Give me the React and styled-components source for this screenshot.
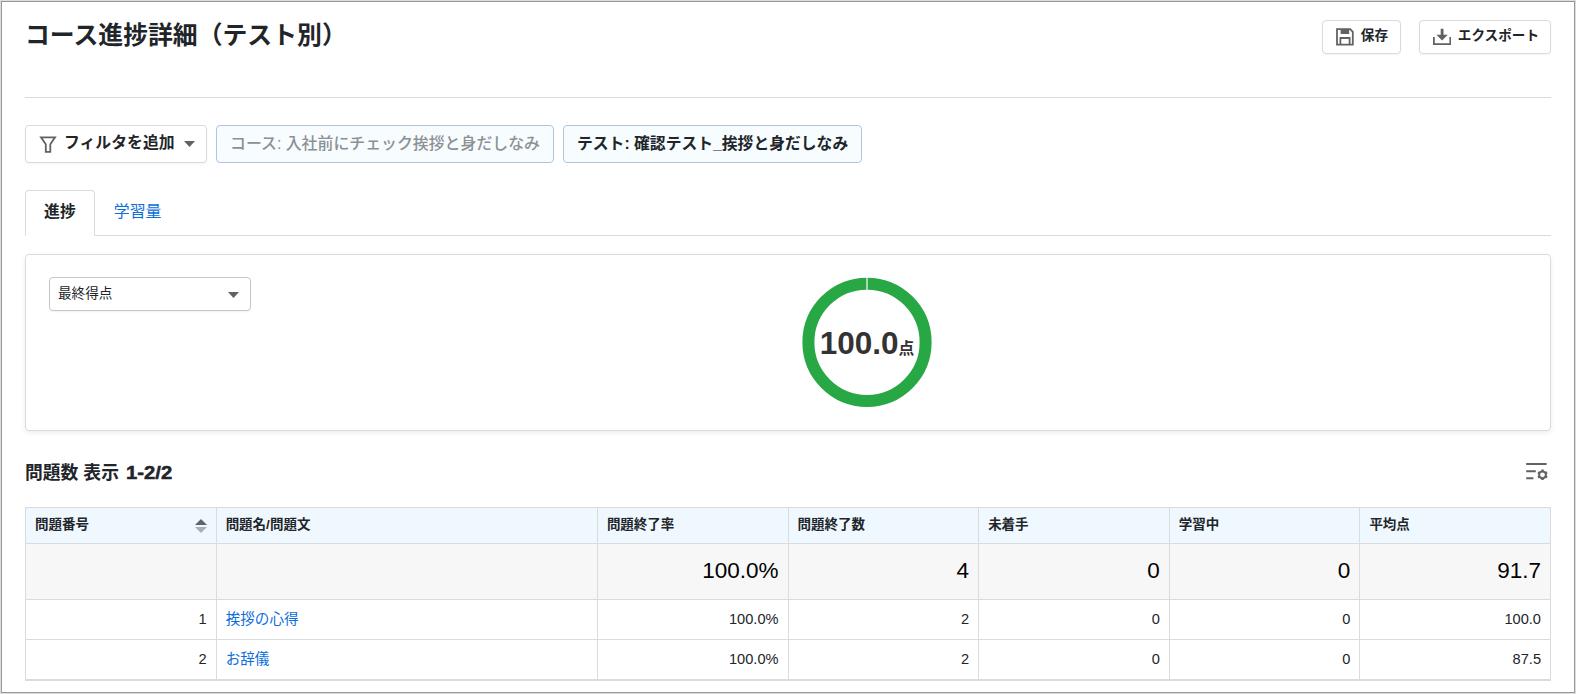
import React from 'react';
import styled, { createGlobalStyle } from 'styled-components';

const GlobalStyle = createGlobalStyle`
  * {
    box-sizing: border-box;
  }

  body {
    margin: 0;
    background: #fff;
    color: #212529;
    font-family: 'Liberation Sans', 'Noto Sans CJK JP', sans-serif;
  }
`;

const Frame = styled.div`
  width: 1576px;
  height: 694px;
  border: 1px solid #dcdcdc;
  overflow: hidden;
`;

const Page = styled.main`
  height: 100%;
  border: 1px solid #999;
  padding: 18px 23px 0;
`;

const Header = styled.header`
  display: flex;
  justify-content: space-between;
  align-items: flex-start;
  height: 78px;
  border-bottom: 1px solid #dadbdd;
`;

const Title = styled.h1`
  margin: 0;
  font-size: 24.85px;
  line-height: 32px;
  font-weight: bold;
`;

const ButtonGroup = styled.div`
  display: flex;
  gap: 18px;
`;

const Button = styled.button`
  display: flex;
  align-items: center;
  gap: 7px;
  height: 34px;
  padding: 0 11px 0 13px;
  border: 1px solid #dadbdd;
  border-radius: 4px;
  background: #fff;
  box-shadow: 0 1px 2px rgba(0, 0, 0, 0.05);
  color: #212529;
  font-family: inherit;
  font-size: 13.6px;
  line-height: 20px;
  font-weight: bold;
  white-space: nowrap;

  span {
    padding-bottom: 2px;
  }
`;

const SaveButton = styled(Button)`
  width: 79px;
`;

const FilterButton = styled(Button)`
  width: 182px;
  height: 38px;
  gap: 7px;
  padding: 0 11px 0 13px;
  font-size: 15.85px;

  svg:last-child {
    margin-left: auto;
  }
`;

const Filters = styled.div`
  display: flex;
  gap: 9px;
  margin-top: 27px;
`;

const Chip = styled.div`
  width: ${({ $width }) => $width}px;
  height: 38px;
  padding: 0 13px;
  border: 1px solid #b0c4de;
  border-radius: 4px;
  background: #f7fcff;
  color: ${({ $muted }) => ($muted ? '#8c9093' : '#212529')};
  font-size: ${({ $muted }) => ($muted ? 15.9 : 15.8)}px;
  line-height: 35px;
  font-weight: ${({ $muted }) => ($muted ? 500 : 'bold')};
  white-space: nowrap;
`;

const Tabs = styled.nav`
  display: flex;
  height: 46px;
  margin-top: 27px;
  border-bottom: 1px solid #dadbdd;
`;

const Tab = styled.a`
  height: 46px;
  padding: 0 18px;
  border: 1px solid ${({ $active }) => ($active ? '#dadbdd' : 'transparent')};
  border-bottom: 1px solid ${({ $active }) => ($active ? '#fff' : 'transparent')};
  border-radius: 4px 4px 0 0;
  color: ${({ $active }) => ($active ? '#212529' : '#0d6edb')};
  font-size: 15.9px;
  line-height: 42px;
  font-weight: ${({ $active }) => ($active ? 'bold' : 'normal')};
`;

const Card = styled.section`
  display: grid;
  grid-template-columns: 202px 1fr;
  height: 177px;
  margin-top: 18px;
  padding: 22px 23px;
  border: 1px solid #dadbdd;
  border-radius: 4px;
  box-shadow: 0 2px 5px rgba(0, 0, 0, 0.08);
`;

const Select = styled.div`
  display: flex;
  justify-content: space-between;
  align-items: center;
  height: 34px;
  padding: 0 11px 0 8px;
  border: 1px solid #c4c6c8;
  border-radius: 4px;
  box-shadow: 0 1px 2px rgba(0, 0, 0, 0.06);
  font-size: 13.6px;
  line-height: 20px;

  span {
    padding-bottom: 1px;
  }

  svg {
    margin-top: 2px;
  }
`;

const Chart = styled.div`
  display: grid;
  justify-content: center;
  margin-left: -44px;

  > * {
    grid-area: 1 / 1;
  }
`;

const Score = styled.div`
  display: flex;
  justify-content: center;
  align-items: baseline;
  padding-top: 47px;
  color: #333;
  font-size: 31.5px;
  line-height: 38px;
  font-weight: bold;

  small {
    font-size: 15.75px;
    line-height: 20px;
  }
`;

const ListBar = styled.div`
  display: flex;
  justify-content: space-between;
  height: 52px;
  margin-top: 24px;
`;

const ListTitle = styled.h2`
  display: flex;
  gap: 5px;
  margin: 0;
  font-size: 17.8px;
  line-height: 36px;
  font-weight: bold;
`;

// Heavier, wider numerals than the regular bold face
const Range = styled.span`
  margin-left: 2px;
  transform: scaleX(1.14);
  transform-origin: left;
  -webkit-text-stroke: 0.5px #212529;
`;

const SettingsButton = styled.button`
  height: 22px;
  margin: 7px 3px 0 0;
  padding: 0;
  border: 0;
  background: none;
`;

const Table = styled.table`
  width: 100%;
  table-layout: fixed;
  border-collapse: separate;
  border-spacing: 0;
  border-top: 1px solid #dadbdd;
  border-left: 1px solid #dadbdd;
  border-bottom: 1px solid #dadbdd;
`;

const HeadCell = styled.th`
  width: ${({ $wide }) => ($wide ? '25%' : '12.5%')};
  height: 36px;
  padding: 0 9px 1px;
  border-right: 1px solid #dadbdd;
  border-bottom: 1px solid #dadbdd;
  background: #f0f8ff;
  font-size: 13.5px;
  line-height: 20px;
  font-weight: bold;
  text-align: left;
`;

const HeadLabel = styled.div`
  display: flex;
  justify-content: space-between;
  align-items: center;

  svg {
    margin-top: 2px;
  }
`;

const Cell = styled.td`
  height: 40px;
  padding: 0 9px 2px;
  border-right: 1px solid #dadbdd;
  border-bottom: 1px solid #dadbdd;
  font-size: 14.6px;
  line-height: 22px;
  text-align: ${({ $left }) => ($left ? 'left' : 'right')};
`;

const TotalCell = styled(Cell)`
  height: 56px;
  padding-bottom: 1px;
  background: #f7f7f7;
  color: #000;
  font-size: 22.5px;
`;

const Link = styled.a`
  color: #0d6edb;
`;

function SaveIcon() {
  return (
    <svg width="18" height="18" viewBox="0 0 18 18" fill="none" stroke="#606264" strokeWidth="1.8">
      <path d="M1 1.2h13.2l2.6 2.6v12.8H1z" />
      <path d="M4.6 1.2h8.6v4.8H4.6z" fill="#606264" stroke="none" />
      <path d="M4.4 16.5V10h9.2v6.5" />
    </svg>
  );
}

function ExportIcon() {
  return (
    <svg width="18" height="18" viewBox="0 0 18 18" fill="#606264">
      <path d="M7.7 .8h2.8v6h4.3L9.1 12.4 3.4 6.8h4.3z" />
      <path d="M.9 9v7.2h16.4V9" fill="none" stroke="#606264" strokeWidth="1.8" />
    </svg>
  );
}

function FilterIcon() {
  return (
    <svg width="18" height="18" viewBox="0 0 18 18" fill="none" stroke="#606264" strokeWidth="1.8">
      <path d="M2 2.3h14l-4.7 6.9v7.6H6.8V9.2z" />
    </svg>
  );
}

function Caret() {
  return (
    <svg width="11" height="6" viewBox="0 0 11 6" fill="#606264">
      <path d="M0 0h11L5.5 6z" />
    </svg>
  );
}

function SortIcon() {
  return (
    <svg width="12" height="14" viewBox="0 0 12 14">
      <path d="M0 6l6-6 6 6z" fill="#5f6469" />
      <path d="M0 8h12l-6 6z" fill="#abaeb2" />
    </svg>
  );
}

function ListSettingsIcon() {
  return (
    <svg width="22" height="20" viewBox="0 0 22 20" fill="none" stroke="#606264" strokeWidth="2">
      <path d="M.2 2h20.4M.2 9.2h9.6M.2 16.3h7.2" />
      <circle cx="16.5" cy="12.8" r="3.4" strokeWidth="2" />
      <path
        d="M16.5 7.6v1.7M16.5 16.3V18M12 10.2l1.5.9M19.5 14.5l1.5.9M12 15.4l1.5-.9M19.5 11.1l1.5-.9"
        strokeWidth="2.4"
      />
    </svg>
  );
}

const columns = [
  '問題番号',
  '問題名/問題文',
  '問題終了率',
  '問題終了数',
  '未着手',
  '学習中',
  '平均点',
];

const totals = ['', '', '100.0%', '4', '0', '0', '91.7'];

const rows = [
  { no: 1, name: '挨拶の心得', values: ['100.0%', '2', '0', '0', '100.0'] },
  { no: 2, name: 'お辞儀', values: ['100.0%', '2', '0', '0', '87.5'] },
];

export default function App() {
  return (
    <>
      <GlobalStyle />
      <Frame>
        <Page>
          <Header>
            <Title>コース進捗詳細（テスト別）</Title>
            <ButtonGroup>
              <SaveButton>
                <SaveIcon />
                <span>保存</span>
              </SaveButton>
              <Button>
                <ExportIcon />
                <span>エクスポート</span>
              </Button>
            </ButtonGroup>
          </Header>

          <Filters>
            <FilterButton>
              <FilterIcon />
              <span>フィルタを追加</span>
              <Caret />
            </FilterButton>
            <Chip $width={338} $muted>コース: 入社前にチェック挨拶と身だしなみ</Chip>
            <Chip $width={299}>テスト: 確認テスト_挨拶と身だしなみ</Chip>
          </Filters>

          <Tabs>
            <Tab $active>進捗</Tab>
            <Tab>学習量</Tab>
          </Tabs>

          <Card>
            <Select>
              <span>最終得点</span>
              <Caret />
            </Select>
            <Chart>
              <svg width="130" height="130" viewBox="0 0 130 130">
                <circle cx="65" cy="65.3" r="58.6" fill="none" stroke="#28a745" strokeWidth="12" />
                <path d="M65 0v13" stroke="#fff" strokeWidth="1.2" />
              </svg>
              <Score>
                100.0<small>点</small>
              </Score>
            </Chart>
          </Card>

          <ListBar>
            <ListTitle>
              <span>問題数</span>
              <span>表示</span>
              <Range>1-2/2</Range>
            </ListTitle>
            <SettingsButton>
              <ListSettingsIcon />
            </SettingsButton>
          </ListBar>

          <Table>
            <thead>
              <tr>
                {columns.map((label, i) => (
                  <HeadCell key={label} $wide={i === 1}>
                    <HeadLabel>
                      {label}
                      {i === 0 && <SortIcon />}
                    </HeadLabel>
                  </HeadCell>
                ))}
              </tr>
            </thead>
            <tbody>
              <tr>
                {totals.map((value, i) => (
                  <TotalCell key={i}>{value}</TotalCell>
                ))}
              </tr>
              {rows.map((row) => (
                <tr key={row.no}>
                  <Cell>{row.no}</Cell>
                  <Cell $left>
                    <Link>{row.name}</Link>
                  </Cell>
                  {row.values.map((value, i) => (
                    <Cell key={i}>{value}</Cell>
                  ))}
                </tr>
              ))}
            </tbody>
          </Table>
        </Page>
      </Frame>
    </>
  );
}
